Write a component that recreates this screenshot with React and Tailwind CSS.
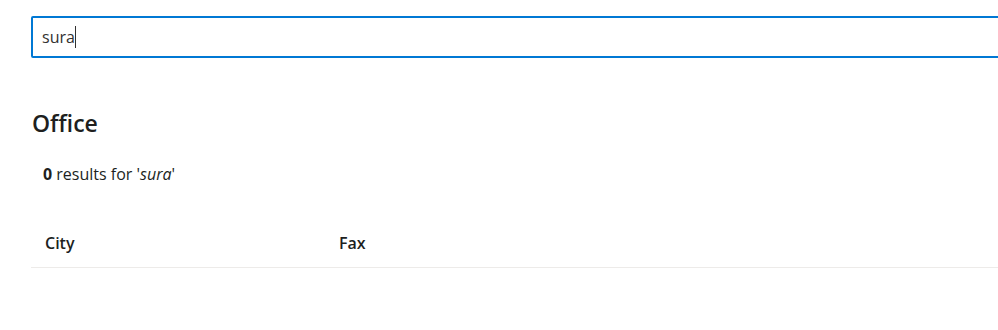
export default function App() {
  return (
    <div className="w-[998px] h-[330px] overflow-hidden bg-white text-[#201f1e]" style={{ fontFamily: '"Segoe UI", "Open Sans", "Noto Sans", sans-serif' }}>
      <div className="w-[1100px] pl-[31px] pt-[16px]">
        <div className="h-[42px] border-2 border-[#0078d4] rounded-[2px] flex items-center pl-[9px]">
          <span className="text-[16px] leading-none text-[#323130]">sura</span>
          <span className="w-px h-[22px] bg-[#323130]" />
        </div>

        <h2 className="mt-[49px] pl-[1px] text-[23px] font-semibold leading-[32px]">Office</h2>

        <p className="mt-[24px] pl-[12px] text-[16px] leading-[22px]">
          <span className="font-bold">0</span> results for '<em>sura</em>'
        </p>

        <div className="mt-[33px] flex border-b border-[#edebe9] h-[50px] items-center text-[16px] font-semibold">
          <div className="w-[308px] pl-[14px]">City</div>
          <div>Fax</div>
        </div>
      </div>
    </div>
  );
}
